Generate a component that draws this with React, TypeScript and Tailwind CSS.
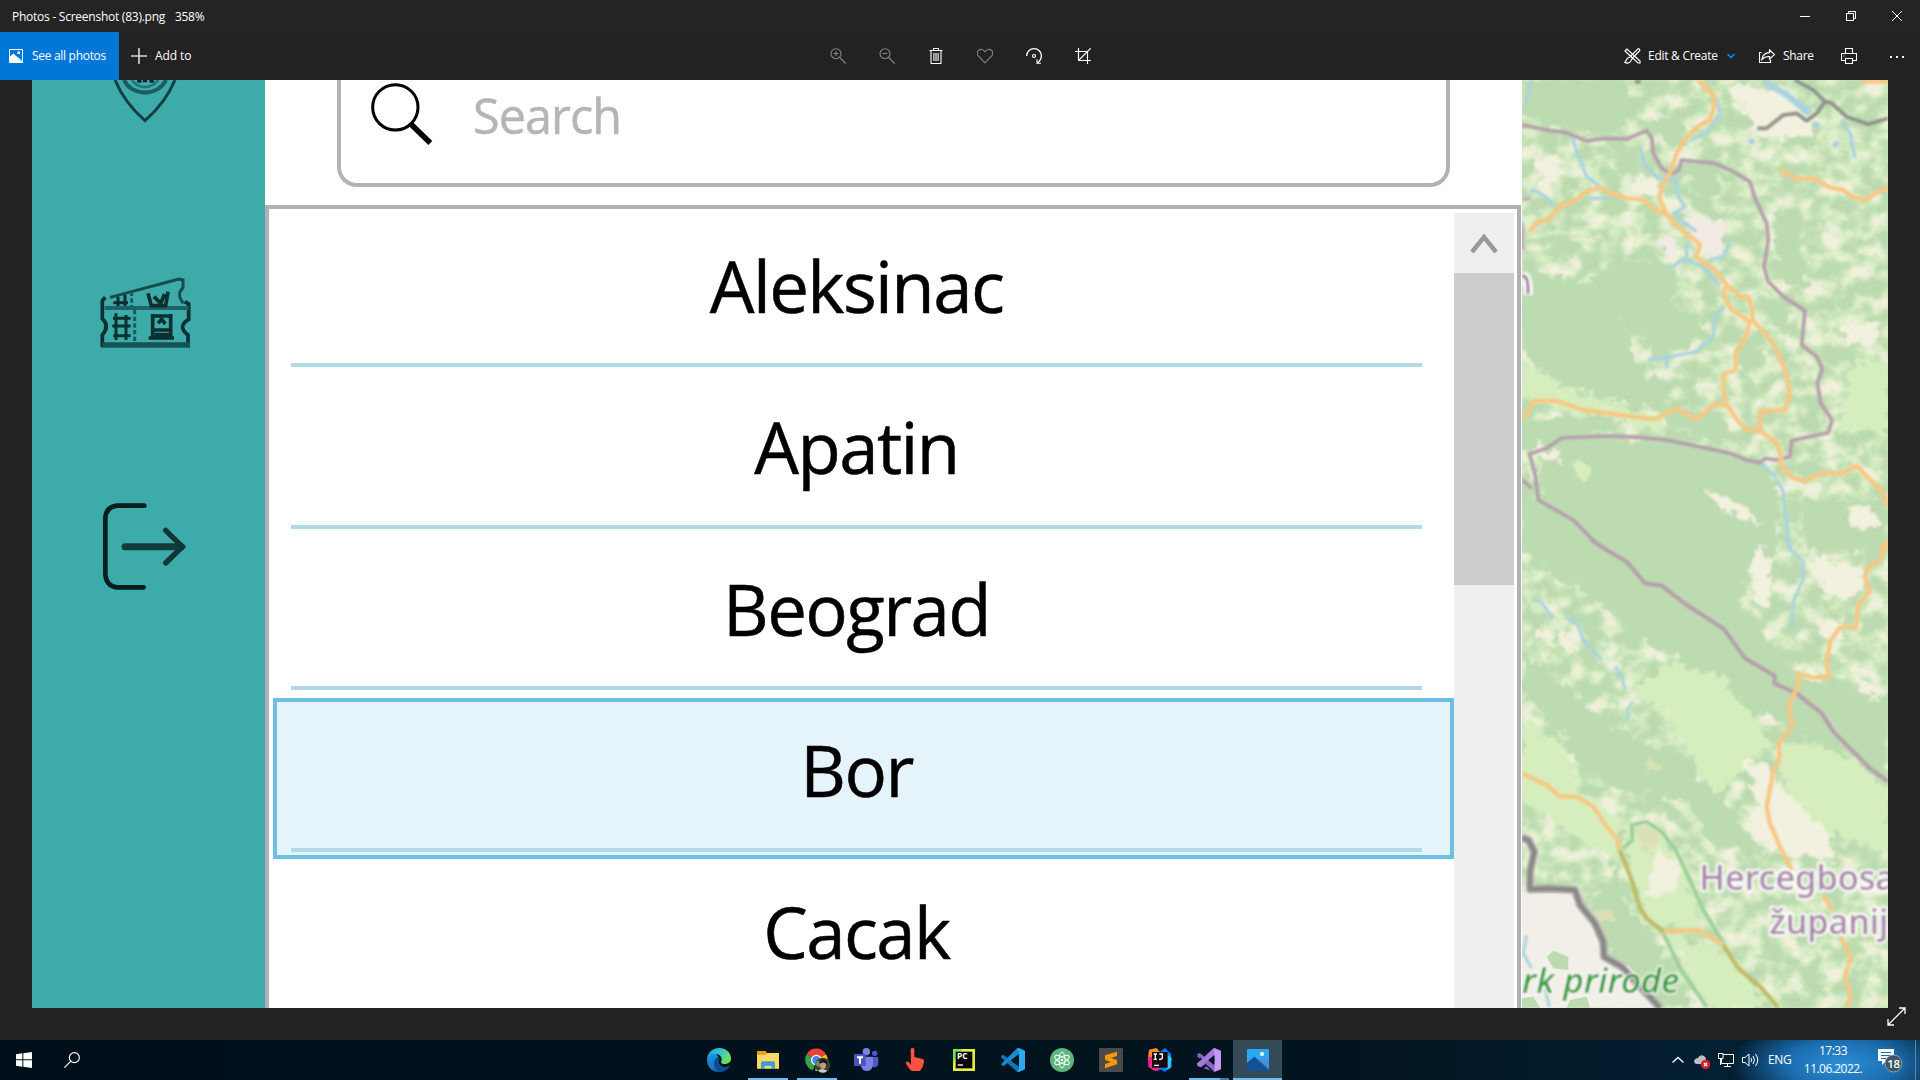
import React from "react";

const cities = [
  { name: "Aleksinac", selected: false },
  { name: "Apatin", selected: false },
  { name: "Beograd", selected: false },
  { name: "Bor", selected: true },
  { name: "Cacak", selected: false },
];

function ToolIcon({ children, dim = false }: { children: React.ReactNode; dim?: boolean }) {
  return (
    <button className={`flex h-12 w-[49px] items-center justify-center ${dim ? "text-[#858585]" : "text-white"}`}>
      <svg width="16" height="16" viewBox="0 0 16 16" fill="none" stroke="currentColor" strokeWidth="1.1">
        {children}
      </svg>
    </button>
  );
}

function TitleBar() {
  return (
    <div className="flex h-8 items-center bg-[#232423] pt-0.5 pl-3 text-xs text-white">
      <span className="w-[163px] whitespace-nowrap tracking-[-0.25px]">Photos - Screenshot (83).png</span>
      <span className="tracking-[-0.3px]">358%</span>
      <div className="-mt-0.5 ml-auto flex h-8">
        <div className="flex w-[46px] items-center justify-center">
          <svg width="10" height="10" viewBox="0 0 10 10" stroke="white"><path d="M0 5.5H10" /></svg>
        </div>
        <div className="flex w-[46px] items-center justify-center">
          <svg width="10" height="10" viewBox="0 0 10 10" stroke="white" fill="none">
            <path d="M.5 2.5H7.5V9.5H.5ZM2.5 2.5V.5H9.5V7.5H7.5" />
          </svg>
        </div>
        <div className="flex w-[46px] items-center justify-center">
          <svg width="10" height="10" viewBox="0 0 10 10" stroke="white"><path d="M0 0L10 10M10 0L0 10" /></svg>
        </div>
      </div>
    </div>
  );
}

function Toolbar() {
  return (
    <div className="flex h-12 items-center bg-[#222222] text-xs text-white">
      <div className="flex w-[813px] items-center">
        <button className="flex h-12 w-[119px] items-center bg-[#0078d7] pl-[9px]">
          <svg width="14" height="14" viewBox="0 0 14 14" fill="none" stroke="white">
            <path d="M.5 .5H13.5V13.5H.5Z" />
            <path d="M1 7.5L4.5 4.5L9.5 9.5L13 13H1Z" fill="white" stroke="none" />
            <path d="M8 7.5L13 12.5" />
            <rect x="8.5" y="2.5" width="2.5" height="2.5" fill="white" stroke="none" />
          </svg>
          <span className="ml-[9px] whitespace-nowrap tracking-[-0.3px]">See all photos</span>
        </button>
        <svg className="ml-3" width="16" height="16" viewBox="0 0 16 16" stroke="#d8d8d8" strokeWidth="1.6">
          <path d="M8 0V16M0 8H16" />
        </svg>
        <span className="ml-2 tracking-[-0.1px]">Add to</span>
      </div>
      <div className="flex">
        <ToolIcon dim>
          <circle cx="6" cy="5.7" r="5" />
          <path d="M3.5 5.5H8.5M6 3V8M9.7 9.5L15.7 15.5" />
        </ToolIcon>
        <ToolIcon dim>
          <circle cx="6" cy="5.7" r="5" />
          <path d="M3.5 5.5H8.5M9.7 9.5L15.7 15.5" />
        </ToolIcon>
        <ToolIcon>
          <path d="M1.5 2.5H14.5M5.5 2.5V.5H10.5V2.5M3 2.5V15.5H13V2.5M5.9 5V13M8 5V13M10.1 5V13" />
        </ToolIcon>
        <ToolIcon dim>
          <path d="M8 14.8L1.3 8C-.2 6.2 0 3.4 1.7 2.1C3.6.7 6.2 1.2 8 3.8C9.8 1.2 12.4.7 14.3 2.1C16 3.4 16.2 6.2 14.7 8Z" />
        </ToolIcon>
        <ToolIcon>
          <path d="M.6 8C.8 3.5 4 .7 8 .7C12.3 .7 15.3 3.8 15.4 7.5C15.4 10.5 14 13 11.4 15" strokeWidth="1.3" />
          <path d="M11 11.2V15.3H15" />
          <circle cx="8" cy="8" r="1.5" strokeWidth="1.2" />
        </ToolIcon>
        <ToolIcon>
          <path d="M0 3.5H12.5V16M3.5 0V12.5H16M3.5 12.5L15.8 .2" strokeWidth="1.15" />
        </ToolIcon>
      </div>
      <div className="ml-auto flex items-center">
        <svg width="17" height="16" viewBox="0 0 17 16" fill="none" stroke="white" strokeWidth="1.2">
          <path d="M1 3L3 1L16 13V15H14L2 4Z" />
          <path d="M14 .8L6.5 8.3L8.5 10.2L15.7 2.6C16 1.3 15 .5 14 .8ZM6 9L3.5 10.3C2.3 11 2.5 13 .8 14.5C3 15.6 6.5 15 7 12.5L8.2 10.8" />
        </svg>
        <span className="ml-[7px] w-[72px] whitespace-nowrap tracking-[-0.27px]">Edit &amp; Create</span>
        <svg className="ml-[7px]" width="8" height="6" viewBox="0 0 8 6" fill="none" stroke="#0a84e0" strokeWidth="1.7">
          <path d="M.5 1L4 4.5L7.5 1" />
        </svg>
        <svg className="ml-6" width="17" height="15" viewBox="0 0 17 15" fill="none" stroke="white" strokeWidth="1.15">
          <path d="M.5 3V13.5H11.5V10.5M.5 3.5H2.5" />
          <path d="M10.5 1L15.5 5.5L10.5 10V7.5C7 7.3 5 8.2 2.8 10.5C3.5 6 6 3.8 10.5 3.6Z" />
        </svg>
        <span className="ml-[7px] w-[31px] tracking-[-0.3px]">Share</span>
        <svg className="ml-[27px]" width="16" height="16" viewBox="0 0 16 16" fill="none" stroke="white" strokeWidth="1.1">
          <path d="M4.500 5.500V.5H11.500V5.500M4 12.500H.5V5.500H15.500V12.500H12M4.500 10.500H11.500V15.500H4.500ZM2.500 8H3.500" />
        </svg>
        <svg className="mr-4 ml-[33px]" width="14" height="4" viewBox="0 0 14 4" fill="white">
          <rect x="0" y="2" width="2" height="2" /><rect x="6" y="2" width="2" height="2" /><rect x="12" y="2" width="2" height="2" />
        </svg>
      </div>
    </div>
  );
}

function AppSidebar() {
  return (
    <aside className="flex w-[233px] shrink-0 flex-col items-center bg-[#3caba9] pr-[7px]">
      <svg className="shrink-0 blur-[0.6px]" width="70" height="50" viewBox="0 0 210 150" fill="none" stroke="#143f40">
        <path d="M15 0C38 55 68 90 105 122C142 90 172 55 195 0" strokeWidth="9" />
        <path d="M42 0C65 50 145 50 168 0" strokeWidth="12" stroke="#1c5c5d" />
        <path d="M66 0C85 28 125 28 144 0" strokeWidth="7" stroke="#256f70" />
        <path d="M88 0V8M105 0V7M125 0V8" strokeWidth="13" stroke="#06282a" />
      </svg>
      <svg className="mt-[144px] shrink-0 blur-[0.7px]" width="94" height="78" viewBox="0 0 282 234" fill="none" stroke="#0c2f30" strokeWidth="9">
        <g transform="translate(-202 -102)">
          <path d="M224 172L215 182V236C230 250 232 265 215 285V322M472 322V285C450 268 450 252 474 238V192L462 185" strokeWidth="11" />
          <path d="M238 172L445 117L457 120V143C443 157 442 170 458 190" stroke="#164b4c" />
          <path d="M222 204H474" stroke="#1c6465" strokeWidth="12" />
          <path d="M215 315H478" stroke="#185354" strokeWidth="16" />
          <path d="M303 155V198M312 210V305" stroke="#1a5b5c" strokeDasharray="13 7" />
          <path d="M262 170V198M283 164V198M248 188H292M247 235H300M245 258H300M248 287H300M256 220V300M286 225V300" />
          <path d="M352 160L362 197H405L412 155M370 170L390 190L402 162M366 222V290M420 222V290M354 294H430M366 228H420M382 250L393 238L404 252M366 270H420M372 284H416" strokeWidth="11" />
        </g>
      </svg>
      <svg className="mt-[147px] shrink-0 blur-[0.6px]" width="88" height="96" viewBox="0 0 264 288" fill="none" stroke="#071d1e" strokeLinecap="round">
        <g transform="translate(-214 -776)">
          <path d="M344 796H262Q227 800 227 836V1002Q230 1038 262 1041H342" strokeWidth="14" />
          <path d="M286 919H455" stroke="#123c3c" strokeWidth="21" />
          <path d="M408 870L458 919L408 968" stroke="#103637" strokeWidth="16" />
        </g>
      </svg>
    </aside>
  );
}

function ScrollBar() {
  return (
    <div className="ml-[2px] flex w-[60px] shrink-0 flex-col bg-[#efefef]">
      <div className="flex h-[60px] items-center justify-center">
        <svg className="blur-[0.6px]" width="28" height="24" viewBox="0 0 28 24" fill="none" stroke="#999" strokeWidth="4.5"><path d="M2 21L14 6L26 21" /></svg>
      </div>
      <div className="h-[312px] bg-[#cdcdcd]" />
    </div>
  );
}

function CityPanel() {
  return (
    <section className="flex w-[1257px] shrink-0 flex-col bg-white font-['Open_Sans','Noto_Sans',sans-serif]">
      <div className="flex h-[125px]">
        <div className="ml-[72px] flex h-[107px] w-[1113px] rounded-b-[20px] border-4 border-t-0 border-[#b1b4b3] pl-[27px]">
          <svg className="blur-[0.6px]" width="66" height="70" viewBox="0 0 198 210" fill="none" stroke="#000">
            <circle cx="82" cy="82" r="68" strokeWidth="9" />
            <path d="M126 130L187 189" strokeWidth="17" />
          </svg>
          <span className="mt-[7px] ml-[39px] text-[48.5px] leading-[56px] tracking-[-0.9px] text-[#b5b5b5] blur-[0.6px] [-webkit-text-stroke:0.5px_#b5b5b5]">Search</span>
        </div>
      </div>
      <div className="flex min-h-0 w-[1256px] flex-1 overflow-hidden border-4 border-b-0 border-[#b0b1b8] pt-1">
        <div className="w-[1183px] shrink-0 pl-1">
          {cities.map((city) => (
            <div
              key={city.name}
              className={`flex h-[161.5px] w-[1181px] flex-col border-4 pr-[28px] pl-[14px] ${
                city.selected ? "border-[#6dbfe5] bg-[#e5f3fb]" : "border-transparent"
              }`}
            >
              <div className="mt-[-6px] flex h-[152px] items-center justify-center pb-[2px] text-[70.8px] leading-none tracking-[-1.6px] text-black blur-[0.6px] [-webkit-text-stroke:0.5px_#000]">
                {city.name}
              </div>
              <div className="h-[4px] shrink-0 bg-[#b0dae6]" />
            </div>
          ))}
        </div>
        <ScrollBar />
      </div>
    </section>
  );
}

function MapView() {
  return (
    <div className="w-[366px] shrink-0 overflow-hidden">
      <svg width="366" height="928" viewBox="0 0 366 928" fill="none">
        <defs>
          <filter id="terrain" x="0" y="0" width="100%" height="100%" colorInterpolationFilters="sRGB">
            <feTurbulence type="fractalNoise" baseFrequency=".05 .06" numOctaves="4" seed="8" />
            <feColorMatrix values="1 0 0 0 0  1 0 0 0 0  1 0 0 0 0  0 0 0 0 1" />
            <feComponentTransfer>
              <feFuncR type="table" tableValues=".737 .737 .737 .737 .74 .77 .83 .89 .949 .949 .949 .949" />
              <feFuncG type="table" tableValues=".855 .855 .855 .855 .858 .88 .92 .935 .943 .943 .943 .943" />
              <feFuncB type="table" tableValues=".694 .694 .694 .694 .696 .71 .755 .82 .870 .870 .870 .870" />
            </feComponentTransfer>
            <feGaussianBlur stdDeviation=".8" />
          </filter>
          <filter id="ragged" x="-10%" y="-10%" width="120%" height="120%">
            <feTurbulence type="fractalNoise" baseFrequency=".03" numOctaves="4" seed="3" />
            <feDisplacementMap in="SourceGraphic" scale="60" xChannelSelector="R" yChannelSelector="G" />
            <feGaussianBlur stdDeviation="2.5" />
          </filter>
          <filter id="soft"><feGaussianBlur stdDeviation="2.5" /></filter>
        </defs>
        <rect width="366" height="928" fill="#cfe5b8" />
        <rect width="366" height="928" filter="url(#terrain)" />

        {/* northern half */}
        <g transform="scale(.33333) translate(-246 -30)">
          <g filter="url(#ragged)">
            <path fill="#bddbb1" d="M246 600L430 640L540 570L720 600L700 700L790 760L740 850L650 850L530 720L600 900L680 960L680 1020L540 1000L380 950L246 850Z" />
            <path fill="#bddbb1" d="M300 1110L500 1095L700 1110L980 1180L1020 1300L1000 1480H500L300 1300Z" />
            <path fill="#bddbb1" d="M246 30H560V180L440 190L246 150ZM520 220L600 240L590 320L520 300ZM740 280H840V390H770ZM640 160L760 100L700 250Z" />
            <path fill="#bddbb1" d="M246 1040L560 1060L480 1090L246 1140ZM670 1020L840 1020L900 1130L700 1080ZM246 1180L300 1300L480 1440H246ZM1080 1290H1340V1440H1100ZM960 690L1060 720L1030 810ZM1000 420L1080 440L1100 650L1010 620Z" />
            <path fill="#bddbb1" d="M320 490L400 500L410 550L340 570ZM900 820L980 840L960 900L880 900Z" />
            <path fill="#d6eebe" d="M246 880L400 960L500 1000L660 1040L670 1090L540 1055L246 990ZM1240 880H1340V1080H1200ZM400 1180L450 1200L440 1250Z" />
            <path fill="#f2f0de" d="M560 340L650 320L680 400L610 380ZM280 1110L380 1180L300 1160ZM780 1250L880 1290L980 1365L860 1330ZM860 40L1060 60L1130 200L960 200ZM1200 760H1310V820H1220ZM1220 1320H1310V1370H1230ZM290 270L360 250L370 320L300 370Z" />
            <path fill="#f1ebe4" d="M740 430L850 460L860 540L800 570L740 500ZM650 500L720 510L690 570Z" />
          </g>
          <g filter="url(#soft)">
            <g stroke="#aad3df" strokeWidth="10" strokeLinejoin="round">
              <path d="M275 30L255 110M398 205L412 250L440 320L480 350M600 230L615 285L655 325L710 330L715 380L735 410L705 430L735 460L770 485M270 360L300 370L340 400M450 385H500M830 85L840 130L800 190L750 210M1205 150L1230 190L1245 265M870 520L850 560L810 570M740 520L740 560L690 595M740 570L790 590L840 650M850 710L822 750L820 800L770 845L690 860L625 870M680 860V895M960 1180L1000 1215L1030 1265L1038 1350L1048 1440" />
              <path d="M970 35L1035 70L1110 130" strokeWidth="20" />
              <path d="M1120 165H1138M1180 230L1195 215M925 215H945" strokeWidth="16" />
            </g>
            <path d="M246 165L330 182L375 187L440 213L490 205L560 207L620 182L635 203L640 250L665 295L695 312L718 298L724 270L825 280L880 305L930 335L945 385L980 460L985 510L972 590L985 635L1030 680L1095 722L1085 825L1130 860L1147 895L1132 940L1142 1000L1176 1050L1165 1088L1055 1112L1050 1160L1010 1170L975 1165L960 1178L920 1170L870 1150L790 1133L680 1110L600 1102L500 1098L365 1104L320 1135L268 1152L285 1210L295 1290L400 1350L460 1412L510 1445M246 1230L275 1255" stroke="#b49fac" strokeWidth="11" strokeLinejoin="round" />
            <path d="M246 386H272M248 460V540" stroke="#c5a9bd" strokeWidth="9" />
            <path d="M246 620Q266 615 264 675" stroke="#fff" strokeWidth="28" />
            <path d="M246 618Q266 613 264 672" stroke="#a97da8" strokeWidth="10" />
            <path d="M1065 30L1120 60L1155 95L1175 100L1220 140L1285 163L1344 145M1155 95L1130 130L1100 152L1070 130L1030 135L980 175H952M585 35H602" stroke="#8e928a" strokeWidth="11" strokeLinejoin="round" />
            <g stroke="#f8c783" strokeWidth="13" strokeLinejoin="round">
              <path d="M775 32L820 75L825 100L810 150L780 165L735 205L710 250L690 310L665 350L658 385L680 430L705 465L765 510L780 525L768 560L825 600L860 645L900 680H925L937 720V750L975 790L1005 830L1035 900L1050 970L1035 1020L960 1025V1080L1010 1120L1025 1160L1020 1185L1060 1225L1095 1232L1150 1207L1205 1212L1250 1187L1300 1240L1325 1260L1344 1310" />
              <path d="M680 435L640 415L605 388L560 385L515 370L478 350L430 370L410 390L365 405L325 450L295 455L268 485M855 650L850 675L875 720L930 755L915 805L888 850L887 900L852 912L850 965L865 1010L895 1055L920 1078L960 1085M865 1010L825 1000L770 1048L710 1015L645 1048L540 1035L430 1020L350 993H280L262 1030L246 1045M1018 300L1070 325L1120 325L1170 353L1210 360L1235 380L1275 392L1305 370L1344 352M1265 35H1344M1344 1415L1320 1440" />
            </g>
          </g>
        </g>

        {/* southern half */}
        <g transform="scale(.33333) translate(-246 1380)">
          <g filter="url(#ragged)">
            <path fill="#bddbb1" d="M246 0H960L920 100L900 200L1000 320L1070 400L1344 480V730L1190 640L1100 600L900 470L740 380L600 290L450 170L246 40ZM246 340L400 460L540 580L720 640L850 780L960 940L830 920L740 780L560 760L430 700L360 560L246 470ZM380 770L500 860L560 1090L640 1200L760 1400H620L480 1190L440 1080L520 1040L500 910Z" />
            <path fill="#d6eebe" d="M680 370L850 410L930 520L980 620L900 700L840 760L750 650L700 540L580 450ZM246 530L360 620L430 770L540 840L520 960L246 780ZM1000 600L1240 650L1344 760V940L1080 850ZM560 880L650 850L730 980L790 1180L640 1150L590 1050ZM690 1180L880 1250L980 1400H800Z" />
            <path fill="#f2f0de" d="M900 660L980 670L1060 780L1150 850L1190 960L1000 940L920 880L960 780ZM1120 50L1240 80L1290 150L1200 180L1120 120ZM940 10L1000 50L980 210L940 180ZM1130 250L1210 240L1220 300L1150 290ZM650 930L710 970L710 1050L610 1080ZM300 250L350 320L300 300ZM360 260L410 320L360 330ZM1220 400L1320 440L1290 470Z" />
            <path fill="#dce1b5" d="M585 865H650V930H600ZM620 655L680 690L630 690ZM460 1110H520V1150H480Z" />
          </g>
          <path fill="#f2efe9" d="M246 1060H400L440 1120L490 1240L570 1280L660 1403H246Z" />
          <path fill="#bddbb1" d="M320 1250L340 1232L385 1250V1290L340 1285ZM246 1375L280 1370L300 1403H246ZM390 1380L440 1370L450 1403H380Z" />
          <g filter="url(#soft)" strokeLinejoin="round">
            <path d="M275 183H300L340 235M375 232L412 250L430 300L485 360M525 380L545 410L555 450M578 485L562 510V545M1045 0L1052 30L1090 65L1088 120L1060 185L1055 262M260 1185L250 1240L275 1285M315 1345L328 1400" stroke="#aad3df" strokeWidth="9" />
            <path d="M455 0L500 30L560 65L615 130L665 137L740 195L850 265L915 355L1005 408L1003 430L1070 460L1145 520L1180 575L1290 685L1344 725" stroke="#b49fac" strokeWidth="12" />
            <path d="M550 925L577 900L575 855L620 845L665 875L710 935L745 1010L790 1110L850 1210M668 1175L720 1285L800 1400" stroke="#9bcf99" strokeWidth="11" />
            <path d="M246 893L265 900L283 935L270 995V1048L330 1045L405 1050L420 1095L465 1150L490 1205L492 1250L545 1280L590 1330L660 1403" stroke="#b7a7b3" strokeWidth="24" />
            <path d="M246 893L265 900L283 935L270 995V1048L330 1045L405 1050L420 1095L465 1150L490 1205L492 1250L545 1280L590 1330L660 1403" stroke="#838a80" strokeWidth="13" />
            <g stroke="#f8c783" strokeWidth="13">
              <path d="M1344 5L1320 60L1282 85L1275 115L1290 155L1255 192L1248 262H1200L1170 305L1160 370L1168 410L1120 413L1075 402L1073 440L1046 498L1058 560L1030 590L1015 615L1020 650L1000 695L980 800L990 850L1020 920L1055 990M1150 1065L1175 1110M1200 1190L1232 1250L1215 1310L1232 1370L1220 1400M246 700L320 735L360 770L410 770L460 800L500 860L530 895L540 930M670 1175L770 1170L820 1195L850 1215" />
              <path d="M540 930L575 1020L600 1105L620 1135L670 1175M850 1215L895 1285L960 1340L1015 1403" stroke="#bdbb67" />
            </g>
          </g>
          <g filter="url(#soft)" fontFamily="'Noto Sans', sans-serif" strokeLinejoin="round">
            <g fill="#a985aa" stroke="#fff" strokeOpacity=".8" strokeWidth="15" style={{ paintOrder: "stroke" }} fontSize="103" fontWeight="500">
              <text x="778" y="1051">Hercegbosa</text>
              <text x="988" y="1182">županij</text>
            </g>
            <text x="246" y="1360" fill="#319c3a" stroke="#fff" strokeOpacity=".65" strokeWidth="10" fontSize="103" fontStyle="italic" fontWeight="500" textLength="472" lengthAdjust="spacingAndGlyphs" style={{ paintOrder: "stroke" }}>rk prirode</text>
          </g>
        </g>
      </svg>
    </div>
  );
}

function TaskItem({ children, open = false, active = false, grouped = false }: { children: React.ReactNode; open?: boolean; active?: boolean; grouped?: boolean }) {
  return (
    <div className={`flex h-10 w-[49px] flex-col items-center ${active ? "bg-[#354a57]" : ""}`}>
      <svg className="mt-[5px] shrink-0" width="30" height="30" viewBox="0 0 90 90" fill="none">{children}</svg>
      {(open || active) && (
        <div className={`mt-[3px] flex h-0.5 ${active ? "w-[49px]" : "w-10"}`}>
          <div className="flex-1 bg-[#76b9ed]" />
          {grouped && <div className="w-[9px] bg-[#4d7a9d]" />}
        </div>
      )}
    </div>
  );
}

function Taskbar() {
  return (
    <footer className="flex h-10 bg-linear-to-r from-[#00101a] via-[#02141f] via-70% to-[#03253c] text-xs text-white">
      <div className="flex w-[694px] items-center">
        <div className="flex w-12 justify-center">
          <svg width="16" height="16" viewBox="0 0 48 48" fill="white">
            <path d="M0 7L19 4V22H0ZM22 4L48 0V22H22ZM0 25H19V44L0 41ZM22 25H48V48L22 44Z" />
          </svg>
        </div>
        <div className="flex w-12 justify-center">
          <svg width="16" height="16" viewBox="0 0 48 48" fill="none" stroke="white" strokeWidth="3.5">
            <circle cx="31" cy="17" r="15" /><path d="M20 28L1 47" />
          </svg>
        </div>
      </div>
      <TaskItem>
        <defs>
          <linearGradient id="edgeTop" x1="0" y1="0" x2="1" y2=".4"><stop stopColor="#1b9de2" /><stop offset=".55" stopColor="#35c1d0" /><stop offset="1" stopColor="#6be05a" /></linearGradient>
          <linearGradient id="edgeLow" x1="0" y1="0" x2="1" y2="1"><stop stopColor="#1aa0e8" /><stop offset="1" stopColor="#0c4fa0" /></linearGradient>
        </defs>
        <path fill="url(#edgeLow)" d="M9 42C9 68 25 81 45 81C60 81 72 73 77 62C68 68 55 69 48 60C42 54 43 47 46 42L38 28C24 24 12 30 9 42Z" />
        <path fill="#124b91" d="M42 36C28 43 25 62 40 78C54 86 70 75 77 62C62 72 46 65 45 54C44 47 49 44 42 36Z" />
        <path fill="url(#edgeTop)" d="M9 43C11 22 26 9 46 9C67 9 81 24 81 41C81 52 71 57 61 57C53 57 49 53 52 48C56 42 51 27 34 27C21 27 12 33 9 43Z" />
      </TaskItem>
      <TaskItem open>
        <path fill="#e5a007" d="M12 18H38L42 24H78V34H12Z" />
        <path fill="#ffd767" d="M12 29H38L43 24H78V71H12Z" />
        <path fill="#3e9bdb" d="M24 54Q24 49 29 49H61Q66 49 66 54V72H55V62H35V72H24Z" />
      </TaskItem>
      <TaskItem open>
        <path fill="#e64335" d="M43 45L14 28A33 33 0 0 1 72 28Z" />
        <path fill="#34a24e" d="M43 45L33 76A33 33 0 0 1 14 28Z" />
        <path fill="#fbc517" d="M43 45L72 28A33 33 0 0 1 40 78Z" />
        <circle cx="43" cy="45" r="16" fill="white" /><circle cx="43" cy="45" r="12" fill="#4285f4" />
        <circle cx="62" cy="61" r="23" fill="#384131" />
        <circle cx="50" cy="56" r="9" fill="#77836d" />
        <ellipse cx="63" cy="59" rx="9" ry="13" fill="#c49a80" />
        <path fill="#171913" d="M51 51Q62 34 76 50L73 58Q66 48 54 56Z" />
        <path fill="#ccd0cb" d="M48 77Q56 69 64 73L76 77Q64 89 48 77Z" />
      </TaskItem>
      <TaskItem>
        <circle cx="46" cy="20" r="11" fill="#7b83eb" /><circle cx="71" cy="25" r="8" fill="#5059c9" />
        <path fill="#5059c9" d="M62 36H82V57Q78 69 65 66Z" />
        <path fill="#7b83eb" d="M31 35H66V60Q63 78 47 78Q31 77 30 60Z" />
        <path fill="#4b53bc" d="M9 27H44V63H9Z" />
        <path stroke="white" strokeWidth="6" d="M18 37H36M27 37V56" />
      </TaskItem>
      <TaskItem>
        <path fill="#ff513f" d="M32 12Q38 5 43 12V36L68 42Q74 44 72 52L68 65L60 78H36Q27 74 17 53Q20 47 27 52L33 59Z" />
      </TaskItem>
      <TaskItem>
        <path fill="#6ee65a" d="M12 12H78V78H12Z" /><path fill="#e6ee3d" d="M40 12H78V78H12V50Z" />
        <path fill="#080808" d="M20 20H70V70H20Z" />
        <text x="24" y="42" fill="white" fontSize="25" fontWeight="700" fontFamily="Open Sans, sans-serif">PC</text>
        <path stroke="white" strokeWidth="4" d="M26 60H42" />
      </TaskItem>
      <TaskItem>
        <path fill="#1175b9" d="M9 34L16 29L63 65V81L57 80L10 38Z" />
        <path fill="#168bd0" d="M9 58L57 10L63 9V27L16 64Z" />
        <path fill="#2baaf0" d="M63 9L81 17V73L63 81L56 77Q63 78 63 71V20Q63 13 56 13Z" />
      </TaskItem>
      <TaskItem>
        <circle cx="45" cy="45" r="36" fill="#5fb57d" />
        <g stroke="#f0fff2" strokeWidth="3"><ellipse cx="45" cy="45" rx="9" ry="24" /><ellipse cx="45" cy="45" rx="9" ry="24" transform="rotate(62 45 45)" /><ellipse cx="45" cy="45" rx="9" ry="24" transform="rotate(-62 45 45)" /></g>
        <circle cx="45" cy="45" r="4" fill="white" />
      </TaskItem>
      <TaskItem>
        <rect x="9" y="9" width="72" height="72" rx="4" fill="#4a4a4a" />
        <path fill="#ff9800" d="M27 31L63 20V33L45 39L63 45V58L27 70V57L45 51L27 44Z" />
      </TaskItem>
      <TaskItem>
        <path fill="#fc8a2d" d="M12 14L34 9L45 20L24 50L8 44Z" /><path fill="#e72b8a" d="M9 36L30 34L44 76L30 78L10 66Z" />
        <path fill="#087cfa" d="M45 20L60 9L78 27L80 66L60 80L42 72Z" /><path fill="#38c9ff" d="M66 28L80 40L76 70L64 72Z" />
        <path fill="#160c10" d="M21 21H68V68H21Z" />
        <path stroke="white" strokeWidth="4" d="M26 27H36M31 27V43M26 43H36M43 27H52V39Q52 43 42 43M27 61H42" />
      </TaskItem>
      <TaskItem open grouped>
        <path fill="#8c62c9" d="M9 28L17 24L62 62V81L11 64Q8 60 9 55L21 45Z" /><path fill="#02141f" d="M17 36V54L27 45ZM20 68L42 52L62 68V81L50 77L38 64L18 76Z" />
        <path fill="#8c62c9" d="M17 24L62 62V81L9 34Z" />
        <path fill="#02141f" d="M17 36V54L27 45Z" />
        <path fill="#a679dc" d="M9 56L58 10L64 9V28L18 66Z" /><path fill="#c79af5" d="M61 9L81 17V73L61 81Z" /><path fill="#02141f" d="M61 33V57L46 45Z" />
      </TaskItem>
      <TaskItem active>
        <rect x="12" y="12" width="66" height="66" rx="2" fill="#2aa9ec" />
        <path fill="#1768b5" d="M12 55L35 35L78 70V78H12Z" /><path fill="#4f8ddc" d="M47 45L61 35L78 50V72Z" /><path fill="#174f94" d="M12 54L34 35L77 78H12Z" />
        <circle cx="57" cy="27" r="6" fill="white" />
      </TaskItem>
      <div className="flex flex-1 items-center bg-[radial-gradient(ellipse_110px_48px_at_560px_24px,#2c8ed6_0%,#1b6caf_50%,transparent_100%)]">
        <svg className="ml-[390px]" width="12" height="8" viewBox="0 0 12 8" fill="none" stroke="white" strokeWidth="1.3"><path d="M.5 6.5L6 1.5L11.5 6.5" /></svg>
        <svg className="mt-1 ml-[10px]" width="16" height="15" viewBox="0 0 16 15">
          <path fill="#b9bec1" d="M2 9Q0 8 0 6Q1 3 4 3Q6-1 10 1Q12 2 12 5Q15 6 14 9Z" />
          <circle cx="11.5" cy="9.5" r="4.7" fill="#d7212e" /><path stroke="white" strokeWidth="1.2" d="M10 8L13 11M13 8L10 11" />
        </svg>
        <svg className="ml-2" width="16" height="14" viewBox="0 0 16 14" fill="none" stroke="white"><path d="M5 1.5H15.5V10.5H3.5V6M.5 .5H5V5.5H.5ZM2.5 6V12M9.5 11V13.5M6 13.5H13" /></svg>
        <svg className="ml-2" width="17" height="14" viewBox="0 0 17 14" fill="none" stroke="white"><path d="M.5 4.5H3L7 1V13L3 9.5H.5ZM9 5Q10.5 7 9 9M11 3Q14 7 11 11M13.5 1Q18 7 13.5 13" /></svg>
        <span className="ml-[9px] w-[23px] tracking-[-0.4px]">ENG</span>
        <div className="ml-3 flex w-[60px] flex-col items-center text-xs leading-[18px] whitespace-nowrap">
          <span className="tracking-[-0.5px]">17:33</span><span className="tracking-[-0.55px]">11.06.2022.</span>
        </div>
        <svg className="ml-[15px]" width="26" height="26" viewBox="0 0 26 26">
          <path fill="white" d="M0 2H16V14H8L4 18V14H0Z" /><path stroke="#176dac" d="M3 5.5H13M3 8.5H13M3 11.5H8" />
          <circle cx="15.5" cy="16.5" r="8.5" fill="#3c5361" stroke="#8ba7b8" />
          <text x="15.5" y="20.5" fill="white" fontSize="11.5" fontWeight="600" textAnchor="middle" letterSpacing="-.4">18</text>
        </svg>
        <div className="ml-auto h-10 w-[5px] border-l border-[#62879d]" />
      </div>
    </footer>
  );
}

export default function App() {
  return (
    <div className="flex h-[1080px] w-[1920px] flex-col overflow-hidden bg-[#222222] font-['Open_Sans','Noto_Sans',sans-serif]">
      <TitleBar />
      <Toolbar />
      <main className="flex h-[960px]">
        <div className="ml-8 flex h-[928px] w-[1856px] overflow-hidden">
          <AppSidebar />
          <CityPanel />
          <MapView />
        </div>
        <div className="flex w-8 items-end justify-start pb-[14px]">
          <svg className="-ml-px shrink-0" width="19" height="19" viewBox="0 0 19 19" fill="none" stroke="white" strokeWidth="1.3"><path d="M1 18L18 1M12 1H18V7M1 12V18H7" /></svg>
        </div>
      </main>
      <Taskbar />
    </div>
  );
}
